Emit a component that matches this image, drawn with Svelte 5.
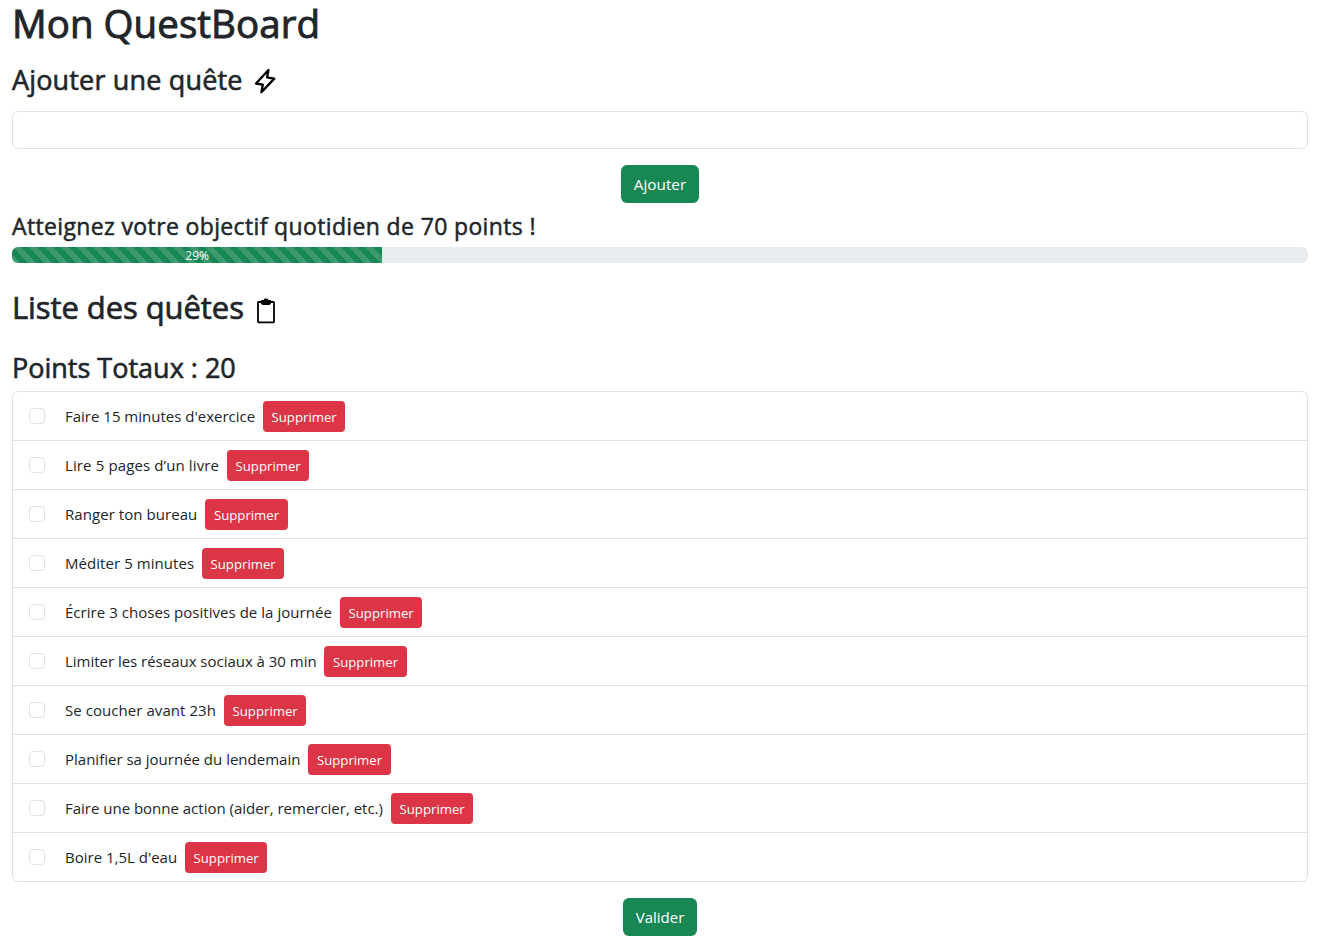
<script>
  const goal = 70;
  const points = 20;
  const percent = (points / goal) * 100;

  let quests = $state([
    { label: "Faire 15 minutes d'exercice", width: 190, tracking: 0, done: false },
    { label: 'Lire 5 pages d’un livre', width: 154, tracking: 0.12, done: false },
    { label: 'Ranger ton bureau', width: 132.4, tracking: 0.06, done: false },
    { label: 'Méditer 5 minutes', width: 129, tracking: 0.06, done: false },
    { label: 'Écrire 3 choses positives de la journée', width: 267, tracking: 0.04, done: false },
    { label: 'Limiter les réseaux sociaux à 30 min', width: 251.4, tracking: -0.02, done: false },
    { label: 'Se coucher avant 23h', width: 151, tracking: 0.06, done: false },
    { label: 'Planifier sa journée du lendemain', width: 235.4, tracking: 0, done: false },
    { label: 'Faire une bonne action (aider, remercier, etc.)', width: 318, tracking: -0.01, done: false },
    { label: "Boire 1,5L d'eau", width: 112, tracking: 0, done: false }
  ]);
  let draft = $state('');

  function add() {
    const label = draft.trim();
    if (!label) return;
    quests.push({ label, width: null, tracking: 0, done: false });
    draft = '';
  }

  function remove(index) {
    quests.splice(index, 1);
  }
</script>

<main>
  <h1>Mon QuestBoard</h1>

  <h3 class="add-title">
    <span>Ajouter une quête</span>
    <svg width="24" height="28" viewBox="0 0 24 28" fill="none" stroke="#000" stroke-width="2.3" stroke-linejoin="round">
      <path d="M15.5 3 3 16.5l6.8 1.2L8.4 25.2 21.3 11.6l-7.2-1.2z" />
    </svg>
  </h3>

  <input class="field" type="text" aria-label="Quête" bind:value={draft} />
  <div class="center"><button class="btn add" onclick={add}>Ajouter</button></div>

  <h4>Atteignez votre objectif quotidien de {goal} points !</h4>
  <div class="progress">
    <div class="bar" style="width: {percent}%">{Math.round(percent)}%</div>
  </div>

  <h2>
    <span>Liste des quêtes</span>
    <svg width="18" height="26" viewBox="0 0 18 26">
      <rect x="1" y="4" width="16" height="20.3" rx=".5" fill="none" stroke="#000" stroke-width="1.8" />
      <path d="M4 2h2.5a2.6 2 0 0 1 5 0H14v3.5L12.5 7h-7L4 5.5z" />
    </svg>
  </h2>

  <h3 class="total">Points Totaux : {points}</h3>
  <ul>
    {#each quests as quest, i}
      <li>
        <input type="checkbox" aria-label={quest.label} bind:checked={quest.done} />
        <span class="label" style:width={quest.width ? `${quest.width}px` : 'auto'} style:letter-spacing="{quest.tracking}px">{quest.label}</span>
        <button class="btn small" onclick={() => remove(i)}>Supprimer</button>
      </li>
    {/each}
  </ul>

  <div class="center"><button class="btn validate">Valider</button></div>
</main>

<style>
  :global(body) {
    background: #fff;
  }
  main {
    box-sizing: border-box;
    width: 1320px;
    height: 942px;
    padding: 0 12px;
    color: #212529;
    font: 400 16px/24px "Segoe UI", "Open Sans", "Noto Sans", sans-serif;
  }
  h1, h2, h3, h4 {
    margin: 0;
    font-weight: 500;
    white-space: nowrap;
    -webkit-text-stroke: 0.6px #212529;
  }
  h2 svg, h3 svg {
    flex: none;
  }
  h1 {
    height: 47px;
    margin-bottom: 16px;
    font-size: 38.5px;
    line-height: 47px;
    letter-spacing: 0.05px;
    -webkit-text-stroke-width: 0.9px;
  }
  h3 {
    height: 34px;
    font-size: 27px;
    line-height: 34px;
  }
  .add-title {
    display: flex;
    gap: 10px;
    margin-bottom: 14px;
    letter-spacing: 0.16px;
  }
  .add-title svg {
    margin-top: 4px;
  }
  .field {
    display: block;
    box-sizing: border-box;
    width: 100%;
    height: 38px;
    padding: 6px 12px;
    border: 1px solid #dee2e6;
    border-radius: 6px;
    font: inherit;
  }
  .center {
    display: flex;
    justify-content: center;
    margin-top: 16px;
  }
  .btn {
    flex: none;
    height: 38px;
    padding: 0;
    border: 0;
    border-radius: 6px;
    background: #198754;
    color: #fff;
    font: inherit;
    font-size: 15.3px;
    white-space: nowrap;
  }
  .add {
    width: 78px;
  }
  .validate {
    width: 74px;
    font-size: 15px;
  }
  h4 {
    height: 29px;
    margin: 9px 0 6px;
    font-size: 23px;
    line-height: 29px;
    letter-spacing: 0.36px;
    -webkit-text-stroke-width: 0.5px;
  }
  .progress {
    display: flex;
    height: 16px;
    overflow: hidden;
    border-radius: 6px;
    background: #e9ecef;
  }
  .bar {
    background-color: #198754;
    background-image: linear-gradient(45deg, rgba(255, 255, 255, 0.15) 25%, transparent 25%, transparent 50%, rgba(255, 255, 255, 0.15) 50%, rgba(255, 255, 255, 0.15) 75%, transparent 75%, transparent);
    background-size: 16px 16px;
    color: #fff;
    font-size: 12px;
    line-height: 17px;
    text-align: center;
  }
  h2 {
    display: flex;
    gap: 13px;
    height: 38px;
    margin: 25px 0 25px;
    font-size: 31px;
    line-height: 38px;
    letter-spacing: -0.08px;
    -webkit-text-stroke-width: 0.7px;
  }
  h2 svg {
    margin-top: 10px;
  }
  .total {
    margin-bottom: 6px;
  }
  ul {
    margin: 0;
    padding: 0;
    border: 1px solid #dee2e6;
    border-radius: 6px;
    list-style: none;
  }
  li {
    display: flex;
    align-items: center;
    box-sizing: border-box;
    height: 49px;
    padding: 0 16px;
    border-bottom: 1px solid #dee2e6;
  }
  li:last-child {
    height: 48px;
    border-bottom: 0;
  }
  li input {
    appearance: none;
    box-sizing: border-box;
    width: 16px;
    height: 16px;
    margin: 0 20px 0 0;
    border: 1px solid #dee2e6;
    border-radius: 4px;
    background: #fff;
  }
  li input:checked {
    background: #0d6efd;
  }
  .label {
    flex: none;
    margin-right: 8px;
    font-size: 15px;
    white-space: nowrap;
  }
  .small {
    width: 82.3px;
    height: 31px;
    margin-top: 1px;
    padding-top: 1px;
    border-radius: 4px;
    background: #dc3545;
    font-size: 13.2px;
  }
</style>
